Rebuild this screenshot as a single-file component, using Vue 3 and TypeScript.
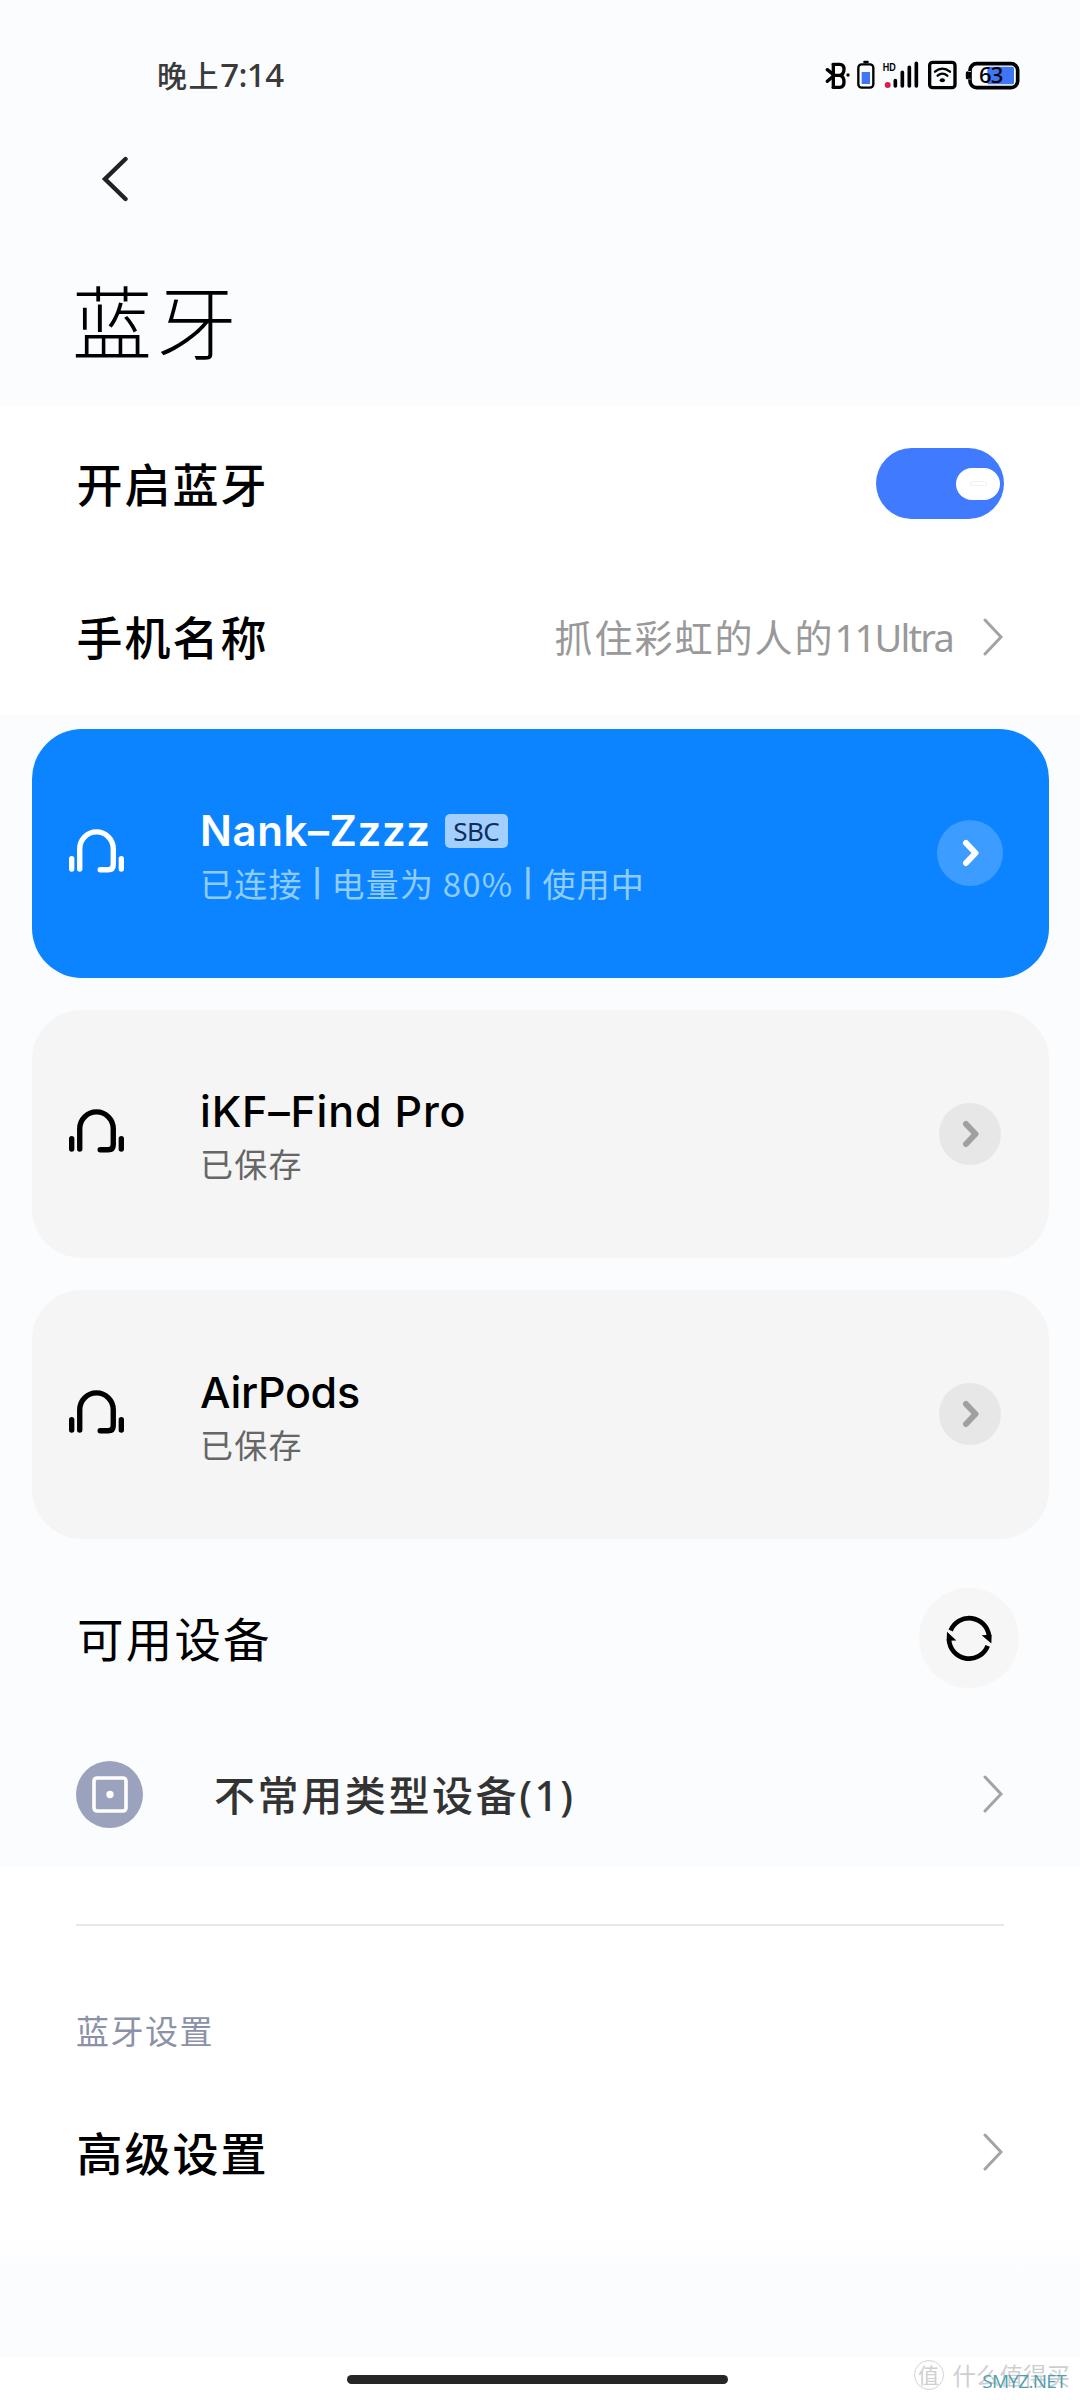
<script setup lang="ts">
interface Device {
  name: string
  status: string[]
  tracking: number
  codec?: string
  active?: boolean
}

const devices: Device[] = [
  { name: 'Nank–Zzzz', status: ['已连接', '电量为 80%', '使用中'], tracking: 0.6, codec: 'SBC', active: true },
  { name: 'iKF–Find Pro', status: ['已保存'], tracking: 0.8 },
  { name: 'AirPods', status: ['已保存'], tracking: -0.3 },
]
</script>

<template>
  <div class="screen">
    <header class="top">
      <div class="statusbar">
        <span class="time">晚上<span class="digits">7:14</span></span>
        <svg class="status-icons" viewBox="75 57 591 96" fill="none" stroke="#000" stroke-linecap="round">
          <g stroke-width="10" stroke-linejoin="round">
            <path d="M82 89 L103 106 L82 124" />
            <path d="M99 73 H119 Q132 73 132 88 Q132 104 119 106 H100 M119 106 Q132 108 132 126 Q132 142 119 142 H99 M100 73 V142" />
          </g>
          <circle cx="144" cy="105" r="5" fill="#000" stroke="none" />
          <rect x="175" y="73" width="45" height="70" rx="10" stroke-width="7" />
          <path d="M193 66 H203" stroke-width="7" />
          <rect x="185" y="96" width="25" height="36" fill="#3f76f5" stroke="none" />
          <text class="hd" x="248" y="93" textLength="39" lengthAdjust="spacingAndGlyphs">HD</text>
          <circle cx="263" cy="135" r="9" fill="#d91f4e" stroke="none" />
          <path d="M286 122 V138 M307 97 V138 M328 82 V138 M349 70 V138" stroke-width="11" />
          <rect x="389" y="67" width="76" height="76" rx="9" stroke-width="10" />
          <path d="M405 95 Q427 77 450 95" stroke-width="7" />
          <path d="M413 107 Q427 95 442 107" stroke-width="7" />
          <ellipse cx="427" cy="121" rx="8" ry="6" fill="#000" stroke="none" />
          <rect x="510" y="71" width="143" height="72" rx="20" stroke-width="11" />
          <path d="M503 94 V96 M503 116 V118" stroke="#fbfcfe" stroke-width="20" stroke-linecap="butt" />
          <path d="M502 98 V113" stroke-width="9" />
          <rect x="562" y="80" width="80" height="53" rx="5" fill="#3f76f5" stroke="none" />
          <text class="level" x="537" y="129" textLength="73">63</text>
        </svg>
      </div>
      <svg class="back" viewBox="0 0 28 46" fill="none" stroke="#222" stroke-width="4.4" stroke-linecap="round">
        <path d="M24.5 3 L4 23 L24.5 43" />
      </svg>
      <h1>蓝牙</h1>
    </header>

    <section class="panel">
      <div class="row">
        <span class="label">开启蓝牙</span>
        <span class="toggle"><i><b></b></i></span>
      </div>
      <div class="row name-row">
        <span class="label">手机名称</span>
        <span class="value">抓住彩虹的人的<span class="latin">11Ultra</span></span>
        <svg class="chevron" viewBox="0 0 20 38"><path d="M2 2 L18 19 L2 36" /></svg>
      </div>
    </section>

    <section class="devices">
      <article v-for="d in devices" :key="d.name" class="card" :class="{ active: d.active }">
        <svg class="headset" viewBox="147 330 164 130" fill="none" stroke="currentColor" stroke-width="16" stroke-linecap="round">
          <path d="M155 418 V449 M303 418 V449 M179 449 V388 A50 50 0 0 1 279 388 V436 Q279 451 264 451 H240" />
        </svg>
        <div class="info">
          <div class="name-line">
            <span class="name" :style="{ letterSpacing: d.tracking + 'px' }">{{ d.name }}</span>
            <span v-if="d.codec" class="badge">{{ d.codec }}</span>
          </div>
          <div class="state">
            <template v-for="(part, i) in d.status" :key="part">
              <span v-if="i > 0" class="bar">|</span>
              <span>{{ part }}</span>
            </template>
          </div>
        </div>
        <span class="go">
          <svg viewBox="0 0 18 28"><path d="M4 4 L13.5 14 L4 24" /></svg>
        </span>
      </article>
    </section>

    <section class="available">
      <div class="heading">
        <h2>可用设备</h2>
        <span class="refresh">
          <svg viewBox="199 134 138 140" fill="none" stroke="#000" stroke-width="14">
            <path d="M213 183 A60 60 0 0 1 328 199" />
            <path d="M324 229 A60 60 0 0 1 208 209" />
            <path d="M306 197 L336 196 L335 222 Z M230 213 L201 214 L202 187 Z" fill="#000" stroke="none" />
          </svg>
        </span>
      </div>
      <div class="row rare">
        <span class="type">
          <svg viewBox="0 0 36 37" fill="none" stroke="#fff">
            <rect x="2" y="2" width="32" height="33" rx="3" stroke-width="3.6" />
            <circle cx="18" cy="18.5" r="3.7" fill="#fff" stroke="none" />
          </svg>
        </span>
        <span class="rare-label">不常用类型设备<span class="count">(1)</span></span>
        <svg class="chevron" viewBox="0 0 20 38"><path d="M2 2 L18 19 L2 36" /></svg>
      </div>
    </section>

    <section class="settings">
      <div class="divider"></div>
      <h3>蓝牙设置</h3>
      <div class="row advanced">
        <span class="label">高级设置</span>
        <svg class="chevron" viewBox="0 0 20 38"><path d="M2 2 L18 19 L2 36" /></svg>
      </div>
    </section>

    <footer class="bottom">
      <div class="handle"></div>
      <div class="mark">
        <span class="seal">值</span>
        <span class="mark-text">什么值得买</span>
        <span class="site">SMYZ.NET</span>
      </div>
    </footer>
  </div>
</template>

<style>
body {
  margin: 0;
  background: #fff;
}
</style>

<style scoped>
.screen {
  width: 1080px;
  height: 2400px;
  overflow: hidden;
  display: flex;
  flex-direction: column;
  background: #fff;
  color: #000;
  font-family: Inter, "Noto Sans CJK SC", sans-serif;
}

h1,
h2,
h3 {
  margin: 0;
  font-weight: 400;
}

span {
  white-space: nowrap;
}

svg {
  display: block;
  flex: none;
}

.top {
  height: 406px;
  background: #fbfcfe;
}

.statusbar {
  display: flex;
  justify-content: space-between;
  align-items: center;
  box-sizing: border-box;
  height: 150px;
  padding: 0 58px 0 157px;
}

.time {
  margin-top: -2px;
  font: 500 30px/40px "Noto Sans CJK SC", sans-serif;
  letter-spacing: 1.6px;
  color: #3a3a3a;
}

.digits {
  font-family: "Noto Sans", sans-serif;
  font-weight: 500;
  font-size: 33px;
  letter-spacing: -0.6px;
}

.status-icons {
  width: 197px;
  height: 32px;
}

.hd {
  font: 700 31px "Liberation Sans", sans-serif;
  fill: #000;
  stroke: none;
}

.level {
  font: 500 66px "Noto Sans", sans-serif;
  fill: #000;
  stroke: none;
}

.back {
  width: 28px;
  height: 46px;
  margin: 6px 0 0 101px;
}

h1 {
  margin: 58px 0 0 72px;
  font: 300 80px/116px "Noto Sans CJK SC", sans-serif;
  letter-spacing: 4.5px;
}

.panel {
  height: 309px;
}

.row {
  display: flex;
  align-items: center;
  box-sizing: border-box;
  padding: 0 76px;
}

.panel .row {
  height: 155px;
}

.panel .name-row {
  height: 151px;
}

.label {
  flex: 1;
  margin: -3px 0 0 0.5px;
  font: 500 46px/66px "Noto Sans CJK SC", sans-serif;
  letter-spacing: 2px;
}

.toggle {
  display: flex;
  justify-content: flex-end;
  align-items: center;
  box-sizing: border-box;
  width: 128px;
  height: 71px;
  padding-right: 4px;
  border-radius: 36px;
  background: #3f7aff;
}

.toggle i {
  display: flex;
  align-items: center;
  justify-content: center;
  width: 44px;
  height: 32px;
  border-radius: 16px;
  background: #fff;
}

.toggle b {
  width: 15px;
  height: 3px;
  border: 1px solid #f0f0f0;
  border-radius: 3px;
}

.value {
  margin-top: -1px;
  font: 400 38px/56px "Noto Sans CJK SC", sans-serif;
  letter-spacing: 2px;
  color: #999;
}

.latin {
  font-family: "Noto Sans", sans-serif;
  letter-spacing: -1.8px;
}

.chevron {
  width: 20px;
  height: 38px;
  margin: 0 1px 0 30px;
  fill: none;
  stroke: #a3a3a3;
  stroke-width: 3;
  stroke-linecap: round;
}

.devices {
  display: flex;
  flex-direction: column;
  gap: 32px;
  padding: 14px 31px 0 32px;
  background: #fbfcfe;
}

.card {
  display: flex;
  align-items: center;
  box-sizing: border-box;
  height: 248.5px;
  padding: 0 48px 0 37px;
  border-radius: 50px;
  background: #f5f5f5;
}

.card.active {
  padding-right: 46px;
  background: #0c84ff;
  color: #fff;
}

.headset {
  width: 55px;
  height: 44px;
  margin-top: -5px;
}

.info {
  flex: 1;
  margin: 3px 0 0 76px;
}

.name-line {
  display: flex;
  align-items: center;
  height: 56px;
}

.name {
  font-weight: 500;
  font-size: 43px;
  line-height: 56px;
}

.active .name {
  font-weight: 600;
  font-size: 42px;
}

.badge {
  margin-left: 14px;
  width: 63px;
  height: 34px;
  border-radius: 5px;
  background: #a3cfff;
  color: #0c2f60;
  font: 400 26px/34px "Noto Sans", sans-serif;
  letter-spacing: -0.5px;
  text-align: center;
}

.state {
  display: flex;
  font: 400 33px/48px "Noto Sans CJK SC", sans-serif;
  letter-spacing: 1.2px;
  color: #666;
}

.bar {
  width: 29px;
  padding-top: 2px;
  font-family: Inter, sans-serif;
  font-size: 27px;
  font-weight: 600;
  line-height: 46px;
  letter-spacing: 0;
  text-align: center;
}

.active .state {
  color: #8fccff;
}

.go {
  display: flex;
  align-items: center;
  justify-content: center;
  width: 62px;
  height: 62px;
  border-radius: 50%;
  background: #e7e7e7;
}

.go svg {
  width: 18px;
  height: 28px;
  margin-left: 2px;
  fill: none;
  stroke: #a0a0a0;
  stroke-width: 6;
  stroke-linecap: round;
  stroke-linejoin: round;
}

.active .go {
  width: 66px;
  height: 66px;
  background: #3d9cff;
}

.active .go svg {
  stroke: #fff;
}

.available {
  height: 328px;
  background: #fbfcfe;
}

.heading {
  display: flex;
  align-items: center;
  justify-content: space-between;
  height: 199px;
  padding: 0 61px 0 77px;
}

h2 {
  margin-top: -3px;
  font: 400 46.5px/66px "Noto Sans CJK SC", sans-serif;
  letter-spacing: 2.2px;
}

.refresh {
  display: flex;
  align-items: center;
  justify-content: center;
  width: 100px;
  height: 100px;
  border-radius: 50%;
  background: #f6f6f6;
}

.refresh svg {
  width: 46px;
  height: 47px;
  margin-top: -2px;
}

.rare {
  height: 113px;
}

.type {
  display: flex;
  align-items: center;
  justify-content: center;
  width: 67px;
  height: 67px;
  border-radius: 50%;
  background: #9aa2bd;
}

.type svg {
  width: 36px;
  height: 37px;
}

.rare-label {
  flex: 1;
  margin: 0 0 0 71px;
  font: 500 41px/60px "Noto Sans CJK SC", sans-serif;
  letter-spacing: 2.6px;
  color: #333;
}

.count {
  font-family: "Noto Sans", sans-serif;
  letter-spacing: 2.4px;
}

.settings {
  height: 368px;
}

.divider {
  height: 2px;
  margin: 57px 76px 0;
  background: #e8e8e8;
}

h3 {
  margin: 80px 0 0 76px;
  font: 400 33px/48px "Noto Sans CJK SC", sans-serif;
  letter-spacing: 1.5px;
  color: #8b91a8;
}

.advanced {
  height: 197px;
}

.bottom {
  position: relative;
  flex: 1;
  background: linear-gradient(#fff, #fbfcfe 40px 122px, #fff 122px);
}

.handle {
  width: 381px;
  height: 9px;
  margin: 140px 0 0 347px;
  border-radius: 5px;
  background: #262626;
}

.mark {
  position: absolute;
  right: 10px;
  bottom: 8px;
  display: flex;
  align-items: center;
  color: #cfcfcf;
  font-family: "Noto Sans CJK SC", sans-serif;
}

.seal {
  box-sizing: border-box;
  width: 30px;
  height: 30px;
  margin-right: 9px;
  border: 1px solid #d4d4d4;
  border-radius: 50%;
  font-size: 21px;
  line-height: 27px;
  text-align: center;
}

.mark-text {
  font-size: 23.5px;
  line-height: 34px;
}

.site {
  position: absolute;
  right: 4px;
  bottom: -2px;
  font: 400 19px/26px "Open Sans", sans-serif;
  letter-spacing: -0.7px;
  color: #4f9fb0;
}
</style>
